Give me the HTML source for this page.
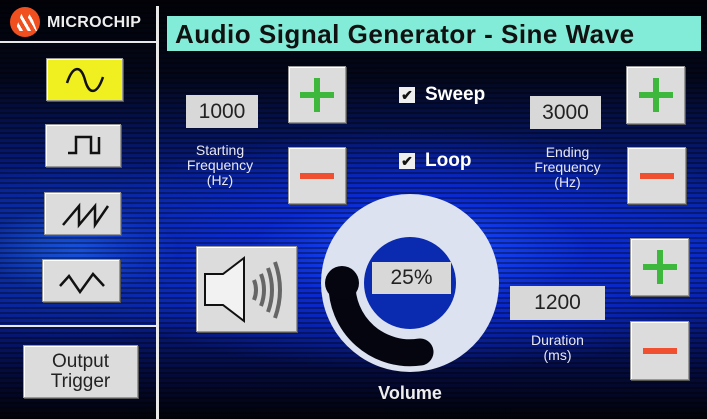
<!DOCTYPE html>
<html><head><meta charset="utf-8"><style>
*{margin:0;padding:0;box-sizing:border-box}
body{width:707px;height:419px;overflow:hidden;position:relative;font-family:"Liberation Sans",sans-serif;
background:
repeating-linear-gradient(0deg,rgba(0,0,0,0.35) 0 2px,transparent 2px 5px),
radial-gradient(ellipse 380px 120px at 420px 250px,#1a4cff 0%,#0a2ad0 45%,transparent 100%),
radial-gradient(ellipse 200px 90px at 80px 250px,#1b5ae0 0%,#0b2a9c 50%,transparent 100%),
linear-gradient(180deg,#020208 0%,#03071a 18%,#061a7a 40%,#0a2fc0 58%,#0820a0 72%,#040c40 88%,#020208 100%);}
.a{position:absolute}
.btn{position:absolute;background:#dcdcdc;border:1px solid #999;box-shadow:inset 1px 1px 0 #fff, 1px 1px 0 #555}
.box{position:absolute;background:#d8d8d8;color:#222;font-size:21px;text-align:center}
.lbl{position:absolute;color:#e8e8f4;font-size:14px;text-align:center;line-height:15px}
.plus::before,.plus::after,.minus::before{content:"";position:absolute;left:50%;top:50%;transform:translate(-50%,-50%)}
.plus::before{width:34px;height:6px;background:#3db83d}
.plus::after{width:6px;height:34px;background:#3db83d}
.minus::before{width:34px;height:6px;background:#f05030}
.chk{position:absolute;width:16px;height:16px;background:#eee;color:#111;font-size:14px;line-height:16px;text-align:center;font-weight:bold}
.cl{position:absolute;color:#fff;font-weight:bold;font-size:19px}
</style></head><body>
<div class="a" style="left:10px;top:7px;width:30px;height:30px;border-radius:50%;background:#f05020"></div>
<div class="a" style="left:15px;top:13px;width:22px;height:18px;background:repeating-linear-gradient(60deg,transparent 0 4px,#fff 4px 7px);clip-path:polygon(0 100%,30% 0,50% 40%,70% 0,100% 100%)"></div>
<div class="a" style="left:47px;top:14px;color:#eee;font-weight:bold;font-size:16px;letter-spacing:0.3px">MICROCHIP</div>
<div class="a" style="left:0;top:41px;width:158px;height:2px;background:#e8e8e8"></div>
<div class="a" style="left:156px;top:6px;width:3px;height:413px;background:#e8e8e8"></div>
<div class="a" style="left:0;top:325px;width:158px;height:2px;background:#e8e8e8"></div>

<div class="btn" style="left:46px;top:58px;width:77px;height:43px;background:#f0f020"><svg width="77" height="43"><path d="M20 24 C26 6 34 6 38 21 C42 36 50 36 56 18" stroke="#111" stroke-width="2.5" fill="none"/></svg></div>
<div class="btn" style="left:45px;top:124px;width:76px;height:43px"><svg width="76" height="43"><path d="M22 28 H30 V12 H45 V28 H53 V12" stroke="#111" stroke-width="2.5" fill="none"/></svg></div>
<div class="btn" style="left:44px;top:192px;width:77px;height:43px"><svg width="77" height="43"><path d="M18 32 L34 13 V32 L50 13 V32 L63 13" stroke="#111" stroke-width="2.5" fill="none"/></svg></div>
<div class="btn" style="left:42px;top:259px;width:78px;height:43px"><svg width="78" height="43"><path d="M17 26 L26 16 L37 32 L50 14 L61 26" stroke="#111" stroke-width="2.5" fill="none"/></svg></div>
<div class="btn" style="left:23px;top:345px;width:115px;height:53px;font-size:19px;color:#222;text-align:center;line-height:20px;padding-top:6px">Output<br>Trigger</div>

<div class="a" style="left:167px;top:16px;width:534px;height:35px;background:#82ecd8;color:#111;font-weight:bold;font-size:26px;letter-spacing:0.5px;padding:3px 0 0 8px;white-space:nowrap">Audio Signal Generator - Sine Wave</div>

<div class="box" style="left:186px;top:95px;width:72px;height:33px;line-height:33px">1000</div>
<div class="btn plus" style="left:288px;top:66px;width:58px;height:57px"></div>
<div class="btn minus" style="left:288px;top:147px;width:58px;height:57px"></div>
<div class="lbl" style="left:165px;top:143px;width:110px">Starting<br>Frequency<br>(Hz)</div>

<div class="chk" style="left:399px;top:87px">✔</div><div class="cl" style="left:425px;top:84px">Sweep</div>
<div class="chk" style="left:399px;top:153px">✔</div><div class="cl" style="left:425px;top:150px">Loop</div>

<div class="box" style="left:530px;top:96px;width:71px;height:33px;line-height:33px">3000</div>
<div class="btn plus" style="left:626px;top:66px;width:59px;height:58px"></div>
<div class="btn minus" style="left:627px;top:147px;width:59px;height:57px"></div>
<div class="lbl" style="left:515px;top:145px;width:105px">Ending<br>Frequency<br>(Hz)</div>

<div class="btn" style="left:196px;top:246px;width:101px;height:86px"><svg width="101" height="86"><path d="M8 27 H26 L47 11 V74 L26 58 H8 Z" fill="#f2f2f2" stroke="#111" stroke-width="2"/><path d="M57 33 Q61 43 57 53 M64 27 Q70 43 64 59 M71 21 Q79 43 71 65 M78 15 Q88 43 78 71" stroke="#666" stroke-width="4" fill="none"/></svg></div>

<svg class="a" style="left:320px;top:192px" width="182" height="182">
<circle cx="90" cy="91" r="89" fill="#dde2f0"/>
<circle cx="90" cy="91" r="46" fill="#0a2ab0"/>
<path d="M22 91 A68 68 0 0 0 100 160" stroke="#050510" stroke-width="27" fill="none" stroke-linecap="round"/>
<circle cx="22" cy="91" r="17" fill="#050510"/>
</svg>
<div class="box" style="left:372px;top:262px;width:79px;height:32px;line-height:32px">25%</div>
<div class="a" style="left:360px;top:383px;width:100px;text-align:center;color:#eee;font-weight:bold;font-size:18px">Volume</div>

<div class="box" style="left:510px;top:286px;width:95px;height:34px;line-height:34px">1200</div>
<div class="lbl" style="left:515px;top:333px;width:85px">Duration<br>(ms)</div>
<div class="btn plus" style="left:630px;top:238px;width:59px;height:58px"></div>
<div class="btn minus" style="left:630px;top:321px;width:59px;height:59px"></div>
</body></html>
